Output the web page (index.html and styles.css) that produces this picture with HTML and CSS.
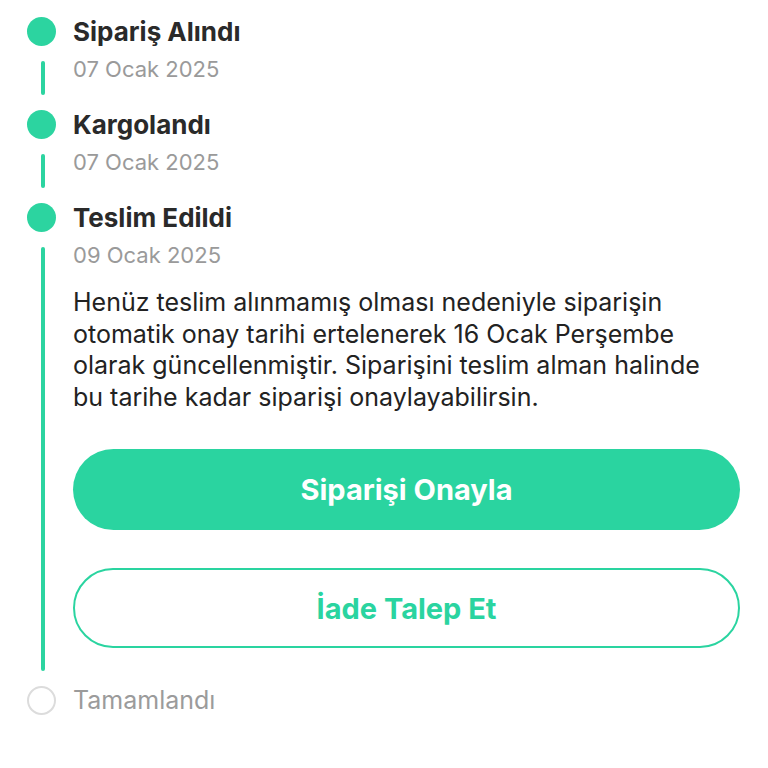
FILE: index.html
```html
<!DOCTYPE html>
<html lang="tr">
<head>
<meta charset="utf-8">
<link rel="stylesheet" href="styles.css">
</head>
<body>
<div class="timeline">
  <div class="step">
    <span class="dot done"></span>
    <div class="title">Sipariş Alındı</div>
    <span class="rail"></span>
    <div class="body short"><div class="date">07 Ocak 2025</div></div>
  </div>
  <div class="step">
    <span class="dot done"></span>
    <div class="title">Kargolandı</div>
    <span class="rail"></span>
    <div class="body short"><div class="date">07 Ocak 2025</div></div>
  </div>
  <div class="step">
    <span class="dot done"></span>
    <div class="title">Teslim Edildi</div>
    <span class="rail"></span>
    <div class="body">
      <div class="date">09 Ocak 2025</div>
      <p class="note">Henüz teslim alınmamış olması nedeniyle siparişin otomatik onay tarihi ertelenerek 16 Ocak Perşembe olarak güncellenmiştir. Siparişini teslim alman halinde bu tarihe kadar siparişi onaylayabilirsin.</p>
      <button class="btn primary">Siparişi Onayla</button>
      <button class="btn outline">İade Talep Et</button>
    </div>
  </div>
  <div class="step">
    <span class="dot pending"></span>
    <div class="title muted">Tamamlandı</div>
  </div>
</div>
</body>
</html>
```

FILE: styles.css
```css
* { box-sizing: border-box; }
html, body { margin: 0; padding: 0; background: #fff; }
body {
  font-family: Inter, "Noto Sans", "Liberation Sans", sans-serif;
  width: 768px;
  height: 768px;
  overflow: hidden;
}
.timeline {
  padding: 17px 28px 0 27px;
}
.step {
  display: grid;
  grid-template-columns: 30px 1fr;
  column-gap: 16px;
}
.dot {
  width: 29px;
  height: 29px;
  border-radius: 50%;
  align-self: center;
}
.dot.done { background: #2cd4a0; }
.dot.pending { border: 2px solid #dcdcdc; background: #fff; }
.title {
  font-size: 26px;
  font-weight: 700;
  color: #2a2a2a;
  line-height: 29px;
}
.title.muted {
  font-weight: 400;
  font-size: 25px;
  color: #9b9b9b;
}
.rail {
  width: 4px;
  border-radius: 2px;
  background: #2cd4a0;
  justify-self: center;
  margin: 15px 0 15px 1px;
}
.body { padding: 11px 0 38px; }
.body.short { padding-bottom: 29px; }
.date {
  font-size: 22px;
  line-height: 24px;
  color: #9a9a9a;
}
.note {
  margin: 20px 0 36px;
  padding-right: 20px;
  font-size: 25px;
  line-height: 31.5px;
  color: #222;
}
.btn {
  display: block;
  width: 100%;
  height: 81px;
  border-radius: 41px;
  font-family: inherit;
  font-size: 29px;
  font-weight: 700;
  cursor: pointer;
}
.btn.primary {
  background: #2ad4a0;
  color: #fff;
  border: none;
  margin-bottom: 38px;
}
.btn.outline {
  background: #fff;
  color: #2ad4a0;
  border: 2px solid #2ad4a0;
  height: 80px;
}
```
